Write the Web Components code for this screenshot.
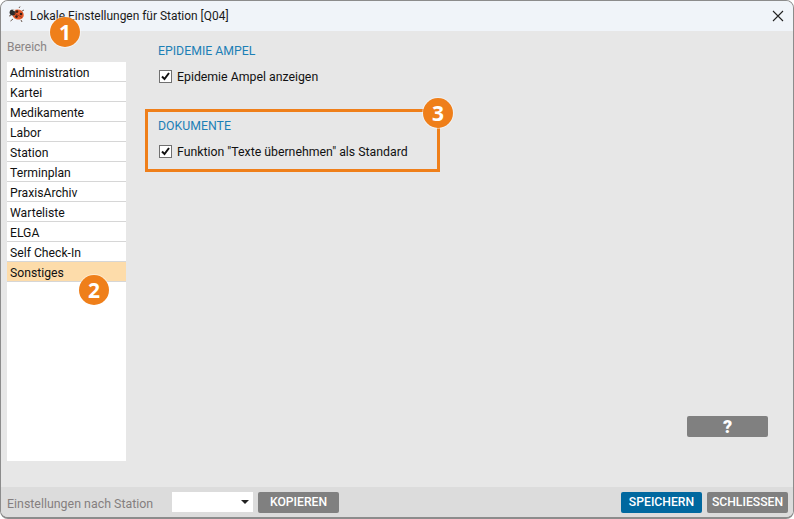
<!DOCTYPE html>
<html lang="de"><head><meta charset="utf-8"><title>Lokale Einstellungen</title>
<style>
html,body{margin:0;padding:0;background:#fff;height:100%;overflow:hidden}
body{font:12px Roboto,sans-serif;color:#111}
</style></head><body>
<app-window>
  <title-bar slot="title">Lokale Einstellungen für Station [Q04]</title-bar>
  <side-list slot="side" label="Bereich">
    <list-item>Administration</list-item><list-item>Kartei</list-item><list-item>Medikamente</list-item><list-item>Labor</list-item><list-item>Station</list-item><list-item>Terminplan</list-item><list-item>PraxisArchiv</list-item><list-item>Warteliste</list-item><list-item>ELGA</list-item><list-item>Self Check-In</list-item><list-item selected>Sonstiges</list-item>
  </side-list>
  <settings-group heading="EPIDEMIE AMPEL"><check-row>Epidemie Ampel anzeigen</check-row></settings-group>
  <settings-group heading="DOKUMENTE" highlighted><check-row>Funktion "Texte übernehmen" als Standard</check-row></settings-group>
  <help-row slot="help"></help-row>
  <foot-bar slot="foot"></foot-bar>
  <step-badge slot="overlay" style="left:49px;top:16px">1</step-badge>
  <step-badge slot="overlay" style="left:78px;top:274px">2</step-badge>
  <step-badge slot="overlay" style="left:422px;top:97px">3</step-badge>
</app-window>
<script>
function def(name,css,html){
  customElements.define(name,class extends HTMLElement{
    constructor(){super();this.attachShadow({mode:'open'}).innerHTML='<style>'+css+'</style>'+(typeof html==='function'?html(this):html);}
  });
}
def('app-window',`
:host{display:flex;flex-direction:column;position:relative;box-sizing:border-box;width:794px;height:519px;background:#e7e7e7;border:1px solid #8c8c8c;border-width:1px 1px 2px 1px;border-radius:8px;overflow:hidden}
.main{flex:1;display:flex;min-height:0}
.content{flex:1;display:flex;flex-direction:column;padding:12px 25px 0 32px;min-width:0}
.groups{display:flex;flex-direction:column;flex:1}
`,`<slot name="title"></slot><div class="main"><slot name="side"></slot><div class="content"><div class="groups"><slot></slot></div><slot name="help"></slot></div></div><slot name="foot"></slot><slot name="overlay"></slot>`);
def('title-bar',`
:host{display:flex;align-items:center;height:30px;background:#f0f4f9;flex:none;font-size:11.95px;color:#1a1a1a;padding-left:7px}
.bug{flex:none;margin-right:5px;margin-top:-3px}
span{flex:1}
.x{flex:none;width:14px;height:14px;margin-right:8px}
`,`<svg class="bug" width="17" height="17" viewBox="0 0 17 17"><path d="M5 13 2.5 15M3 9.5 1 10M11 2l1-1.5M14 5l2-1M13 14l1 2" stroke="#6b5a50" stroke-width="1" fill="none"/><ellipse cx="10" cy="8.5" rx="5.8" ry="5" fill="#e4592a" transform="rotate(20 10 8.5)"/><circle cx="4.6" cy="6.6" r="3" fill="#2b2b2b"/><path d="M4 3.5h3.5l-1 2z" fill="#e9e3dc"/><circle cx="9" cy="5.6" r="1.3" fill="#3a2019"/><circle cx="13" cy="8" r="1.3" fill="#3a2019"/><circle cx="8.5" cy="10.6" r="1.3" fill="#3a2019"/><path d="M6 7 14 11.5" stroke="#8a2f14" stroke-width=".8"/></svg><span><slot></slot></span><svg class="x" viewBox="0 0 14 14"><path d="M2 2 12 12M12 2 2 12" stroke="#222" stroke-width="1.1" fill="none"/></svg>`);
def('side-list',`
:host{display:flex;flex-direction:column;width:119px;margin-left:6px;flex:none;padding-top:9px}
.l{height:22px;line-height:14px;color:#8a8484;font-size:12px}
.box{background:#fff;height:399px;display:flex;flex-direction:column}
`,el=>`<div class="l">${el.getAttribute('label')}</div><div class="box"><slot></slot></div>`);
def('list-item',`
:host{display:block;height:20px;box-sizing:border-box;border-bottom:1px solid #d6d6d6;line-height:20px;padding:1px 0 0 3px;font-size:12.2px;color:#111}
:host([selected]){background:#fddcaa}
`,`<slot></slot>`);
def('settings-group',`
:host{display:block;position:relative;padding-top:1px;height:38px;margin-bottom:27px}
:host([highlighted]){box-sizing:border-box;width:295px;height:63px;margin:0 0 0 -13px;padding:7px 0 0 10px;border:3px solid #ef7f1a}
h3{margin:0 0 12px;font:400 12.3px/14px Roboto,sans-serif;color:#1c7fb6}
`,el=>`<h3>${el.getAttribute('heading')}</h3><slot></slot>`);
def('check-row',`
:host{display:flex;align-items:center;height:14px;font-size:12.3px;color:#111}
.b{box-sizing:border-box;width:13px;height:13px;border:1px solid #707070;background:#fff;margin:-1px 5px 0 1px;display:flex;flex:none}
`,`<span class="b"><svg width="11" height="11" viewBox="0 0 11 11"><path d="M2 5.5 4.5 8 9 2" fill="none" stroke="#111" stroke-width="2"/></svg></span><slot></slot>`);
def('help-row',`
:host{display:flex;justify-content:flex-end;flex:none;padding-bottom:50px}
`,`<ui-button kind="help" style="width:81px">?</ui-button>`);
def('ui-button',`
:host{display:inline-flex;align-items:center;justify-content:center;box-sizing:border-box;height:21px;background:#808080;color:#fff;border-radius:2px;font:500 12.2px Roboto,sans-serif;flex:none}
:host([kind=primary]){background:#00689f}
:host([kind=help]){font-weight:900;font-size:18px}
`,`<slot></slot>`);
def('foot-bar',`
:host{display:flex;align-items:center;height:30px;background:#dcdcdc;flex:none;padding:0 5px 0 6px;color:#857f7f;font-size:12.4px}
.t{width:165px;padding-top:2px}
.sel{width:81px;height:20px;background:#fff;position:relative;margin-right:5px;flex:none}
.sel i{position:absolute;right:4px;top:8px;border:4px solid transparent;border-top:4px solid #222;border-bottom:0}
.sp{flex:1}
`,`<span class="t">Einstellungen nach Station</span><span class="sel"><i></i></span><ui-button style="width:81px">KOPIEREN</ui-button><span class="sp"></span><ui-button kind="primary" style="width:81px;margin-right:5px">SPEICHERN</ui-button><ui-button style="width:81px">SCHLIESSEN</ui-button>`);
def('step-badge',`
:host{position:absolute;box-sizing:border-box;width:30px;height:30px;border-radius:50%;background:#ef7f1a;box-shadow:0 0 0 1px rgba(255,255,255,.45);color:#fff;font:700 21px/30px "Open Sans",sans-serif;text-align:center}
`,`<slot></slot>`);
</script>
</body></html>
